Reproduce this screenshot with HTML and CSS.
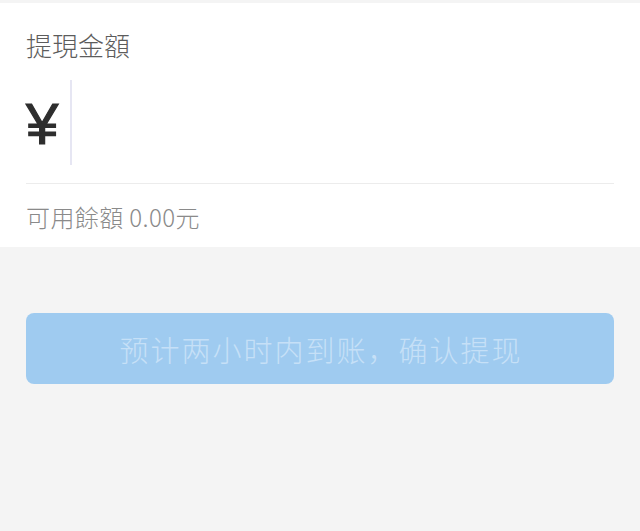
FILE: index.html
```html
<!DOCTYPE html>
<html lang="zh">
<head>
    <meta charset="UTF-8">
    <meta name="viewport" content="width=device-width, initial-scale=1.0">
    <title>提現</title>
    <link rel="stylesheet" href="styles.css">
</head>
<body>

    <div class="panel">
        <div class="label">提現金額</div>
        <div class="amount-row">
            <span class="currency">¥</span>
            <span class="cursor"></span>
        </div>
        <div class="divider"></div>
        <div class="balance">可用餘額 0.00元</div>
    </div>

    <button class="submit-btn" disabled>预计两小时内到账，确认提现</button>

</body>
</html>
```

FILE: styles.css
```css
body {
    margin: 0;
    padding-top: 3px;
    background-color: #f4f4f4;
    font-family: "Noto Sans CJK TC", "Noto Sans CJK SC", sans-serif;
}
.panel {
    background: white;
    padding: 29px 26px 18px 26px;
}
.label {
    font-size: 26px;
    line-height: 26px;
    font-weight: 300;
    color: #5c5c5c;
}
.amount-row {
    display: flex;
    align-items: center;
    height: 85px;
    margin-top: 22px;
}
.currency {
    font-family: "Liberation Sans", Arial, sans-serif;
    font-size: 58px;
    line-height: 1;
    color: #2e2e2e;
    -webkit-text-stroke: 1.2px #2e2e2e;
    padding-top: 2px;
}
.cursor {
    width: 2px;
    height: 85px;
    margin-left: 12px;
    background: #e6e6f3;
}
.divider {
    height: 1px;
    background: #ececec;
    margin-top: 18px;
}
.balance {
    margin-top: 21px;
    font-size: 24px;
    line-height: 24px;
    font-weight: 300;
    letter-spacing: 0.4px;
    color: #8a8a8a;
}
.submit-btn {
    display: block;
    width: 588px;
    height: 71px;
    margin: 66px auto 0;
    border: none;
    border-radius: 8px;
    background: #9fcbf0;
    color: #c6e0f7;
    font-family: "Noto Sans CJK SC", sans-serif;
    font-size: 29px;
    font-weight: 300;
    letter-spacing: 2px;
    padding: 0 0 0 2px;
}
```
